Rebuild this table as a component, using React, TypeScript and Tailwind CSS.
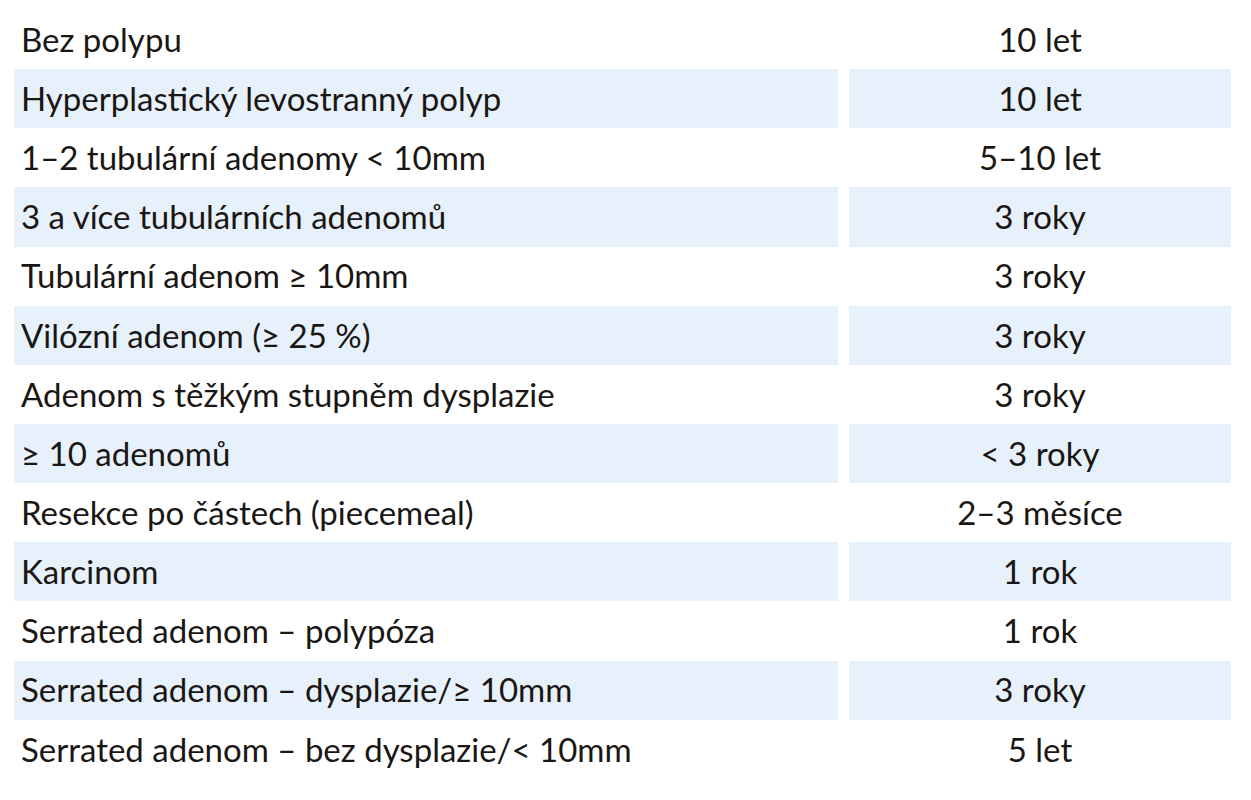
const rows: [string, string][] = [
  ["Bez polypu", "10 let"],
  ["Hyperplastický levostranný polyp", "10 let"],
  ["1–2 tubulární adenomy < 10mm", "5–10 let"],
  ["3 a více tubulárních adenomů", "3 roky"],
  ["Tubulární adenom ≥ 10mm", "3 roky"],
  ["Vilózní adenom (≥ 25 %)", "3 roky"],
  ["Adenom s těžkým stupněm dysplazie", "3 roky"],
  ["≥ 10 adenomů", "< 3 roky"],
  ["Resekce po částech (piecemeal)", "2–3 měsíce"],
  ["Karcinom", "1 rok"],
  ["Serrated adenom – polypóza", "1 rok"],
  ["Serrated adenom – dysplazie/≥ 10mm", "3 roky"],
  ["Serrated adenom – bez dysplazie/< 10mm", "5 let"],
];

export default function App() {
  return (
    <div className="h-[800px] w-[1251px] bg-white pt-[10px] text-[#1a1614] [font-family:Lato,'Open_Sans',sans-serif]">
      <div className="ml-[14px] flex w-[1217px] flex-col">
        {rows.map(([label, interval], i) => {
          const shaded = i % 2 === 1;
          return (
            <div key={i} className="flex h-[59.15px] gap-[11px]">
              <div
                className={`flex w-[824px] items-center pl-[7px] text-[33px] ${shaded ? "bg-[#e7f1fb]" : ""}`}
              >
                {label}
              </div>
              <div
                className={`flex flex-1 items-center justify-center text-[33px] ${shaded ? "bg-[#e7f1fb]" : ""}`}
              >
                {interval}
              </div>
            </div>
          );
        })}
      </div>
    </div>
  );
}
